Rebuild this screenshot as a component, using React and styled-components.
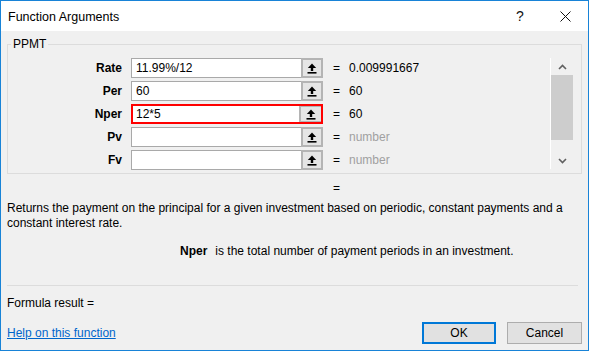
import React from 'react';
import styled, { createGlobalStyle } from 'styled-components';

const GlobalStyle = createGlobalStyle`
  html, body {
    margin: 0;
    padding: 0;
    background: #f0f0f0;
  }
  * {
    box-sizing: border-box;
  }
`;

const font = `'Liberation Sans', Arial, sans-serif`;

const Dialog = styled.div`
  width: 589px;
  height: 351px;
  border: 1px solid #1883d7;
  background: #f0f0f0;
  display: flex;
  flex-direction: column;
  font-family: ${font};
  font-size: 12px;
  color: #000;
  overflow: hidden;
`;

const TitleBar = styled.div`
  height: 30px;
  background: #fff;
  display: flex;
  align-items: center;
  padding-left: 7px;
  flex-shrink: 0;
`;

const Title = styled.div`
  flex: 1;
  font-size: 12.5px;
  padding-top: 1px;
`;

const TitleButton = styled.div`
  width: ${({ $w }) => $w}px;
  height: 30px;
  display: flex;
  align-items: center;
  justify-content: center;
  font-size: 14px;
  color: #111;
`;

const Body = styled.div`
  flex: 1;
  display: flex;
  flex-direction: column;
  padding: 5px 6px 0 6px;
`;

const Group = styled.fieldset`
  margin: 0;
  border: 1px solid #dcdcdc;
  padding: 6px 8px 3px 0;
  display: flex;
`;

const Legend = styled.legend`
  font-size: 12px;
  line-height: 16px;
  height: 16px;
  padding: 0 2px;
  margin-left: 3px;
`;

const Args = styled.div`
  flex: 1;
  display: flex;
  flex-direction: column;
  gap: 3px;
`;

const Row = styled.div`
  display: grid;
  grid-template-columns: 114px 201px 26px 1fr;
  align-items: center;
  height: 20px;
`;

const ArgName = styled.div`
  font-weight: bold;
  text-align: right;
`;

const InputBox = styled.div`
  margin-left: 9px;
  width: 192px;
  height: 20px;
  display: flex;
  background: #fff;
  border: ${({ $active }) => ($active ? '2px solid #f00' : '1px solid #a9a9a9')};
`;

const Field = styled.div`
  flex: 1;
  padding-left: ${({ $active }) => ($active ? 3 : 4)}px;
  display: flex;
  align-items: center;
  white-space: nowrap;
`;

const RefButton = styled.div`
  width: 22px;
  display: flex;
  align-items: center;
  justify-content: center;
  background: #e5e5e5;
  border: 2px solid #b4b4b4;
  border-right: ${({ $active }) => ($active ? '0' : '2px solid #b4b4b4')};
  border-top: ${({ $active }) => ($active ? '1px solid #b4b4b4' : '2px solid #b4b4b4')};
  border-bottom: ${({ $active }) => ($active ? '1px solid #b4b4b4' : '2px solid #b4b4b4')};
  margin: ${({ $active }) => ($active ? '0' : '-1px -1px -1px 0')};
`;

const Equals = styled.div`
  padding-left: 10px;
`;

const Value = styled.div`
  color: ${({ $muted }) => ($muted ? '#a0a0a0' : '#000')};
  white-space: nowrap;
`;

const Scrollbar = styled.div`
  width: 23px;
  height: 111px;
  border-left: 1px solid #fff;
  display: flex;
  flex-direction: column;
  align-items: stretch;
`;

const ScrollArrow = styled.div`
  height: 17px;
  display: flex;
  align-items: center;
  justify-content: center;
`;

const Thumb = styled.div`
  height: 65px;
  background: #cdcdcd;
`;

const ScrollSpace = styled.div`
  flex: 1;
`;

const ResultEquals = styled.div`
  margin-top: 7px;
  padding-left: 326px;
  line-height: 14px;
  height: 14px;
`;

const Description = styled.div`
  margin-top: 6px;
  line-height: 15px;
  font-size: 12px;
`;

const ArgHelp = styled.div`
  margin-top: 13px;
  padding-left: 173px;
  line-height: 15px;
  display: flex;
  gap: 8px;
  b {
    font-weight: bold;
  }
`;

const Separator = styled.div`
  margin-top: 26px;
  height: 1px;
  background: #dcdcdc;
  margin-right: 4px;
`;

const FormulaResult = styled.div`
  margin-top: 10px;
  line-height: 15px;
`;

const Footer = styled.div`
  margin-top: 11px;
  display: flex;
  align-items: center;
  gap: 11px;
`;

const HelpLink = styled.a`
  flex: 1;
  color: #0066cc;
  text-decoration: underline;
  cursor: pointer;
`;

const Button = styled.div`
  width: ${({ $w }) => $w}px;
  height: 22px;
  display: flex;
  align-items: center;
  justify-content: center;
  background: #e1e1e1;
  border: ${({ $primary }) => ($primary ? '2px solid #0078d7' : '1px solid #adadad')};
`;

const RefIcon = () => (
  <svg width="10" height="11" viewBox="0 0 10 11">
    <polygon points="5,0.5 0.8,5 9.2,5" fill="#000" />
    <rect x="3.8" y="4.5" width="2.4" height="3.5" fill="#000" />
    <rect x="0.5" y="9" width="9" height="1.6" fill="#000" />
  </svg>
);

const Chevron = ({ down }) => (
  <svg width="9" height="6" viewBox="0 0 9 6">
    <polyline
      points={down ? '1,1 4.5,4.5 8,1' : '1,5 4.5,1.5 8,5'}
      fill="none"
      stroke="#606060"
      strokeWidth="1.6"
    />
  </svg>
);

const CloseIcon = () => (
  <svg width="11" height="11" viewBox="0 0 11 11">
    <path d="M0.5 0.5 L10.5 10.5 M10.5 0.5 L0.5 10.5" stroke="#111" strokeWidth="1" />
  </svg>
);

const args = [
  { name: 'Rate', input: '11.99%/12', value: '0.009991667' },
  { name: 'Per', input: '60', value: '60' },
  { name: 'Nper', input: '12*5', value: '60', active: true },
  { name: 'Pv', input: '', value: 'number', muted: true },
  { name: 'Fv', input: '', value: 'number', muted: true },
];

const App = () => (
  <>
    <GlobalStyle />
    <Dialog>
      <TitleBar>
        <Title>Function Arguments</Title>
        <TitleButton $w={44}>?</TitleButton>
        <TitleButton $w={46}>
          <CloseIcon />
        </TitleButton>
      </TitleBar>
      <Body>
        <Group>
          <Legend>PPMT</Legend>
          <Args>
            {args.map((a) => (
              <Row key={a.name}>
                <ArgName>{a.name}</ArgName>
                <InputBox $active={a.active}>
                  <Field $active={a.active}>{a.input}</Field>
                  <RefButton $active={a.active}>
                    <RefIcon />
                  </RefButton>
                </InputBox>
                <Equals>=</Equals>
                <Value $muted={a.muted}>{a.value}</Value>
              </Row>
            ))}
          </Args>
          <Scrollbar>
            <ScrollArrow>
              <Chevron />
            </ScrollArrow>
            <Thumb />
            <ScrollSpace />
            <ScrollArrow>
              <Chevron down />
            </ScrollArrow>
          </Scrollbar>
        </Group>
        <ResultEquals>=</ResultEquals>
        <Description>
          Returns the payment on the principal for a given investment based on periodic, constant
          payments and a constant interest rate.
        </Description>
        <ArgHelp>
          <b>Nper</b>
          <span>is the total number of payment periods in an investment.</span>
        </ArgHelp>
        <Separator />
        <FormulaResult>Formula result =</FormulaResult>
        <Footer>
          <HelpLink>Help on this function</HelpLink>
          <Button $w={74} $primary>
            OK
          </Button>
          <Button $w={75}>Cancel</Button>
        </Footer>
      </Body>
    </Dialog>
  </>
);

export default App;
